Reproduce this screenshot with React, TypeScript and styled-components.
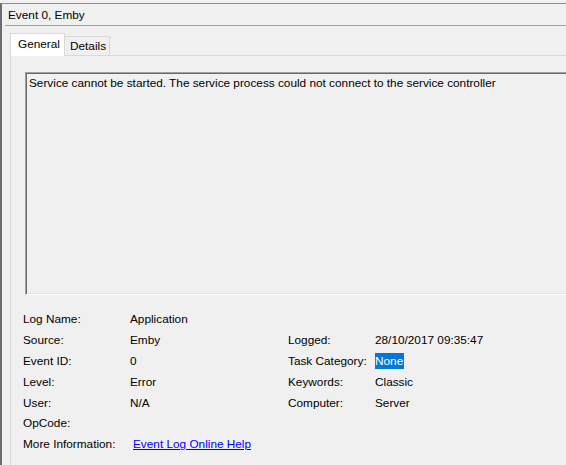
import React from "react";
import styled, { createGlobalStyle } from "styled-components";

const GlobalStyle = createGlobalStyle`
  html, body {
    margin: 0;
    padding: 0;
    background: #f0f0f0;
    overflow: hidden;
  }
  body {
    font-family: "Liberation Sans", Arial, sans-serif;
    font-size: 11.8px;
    color: #000;
  }
`;

const Page = styled.div`
  padding-top: 3px;
  width: 566px;
  height: 465px;
  overflow: hidden;
`;

const Window = styled.div`
  width: 640px;
  height: 462px;
  border-top: 1px solid #8f8f8f;
  border-left: 2px solid #6d6d6d;
  box-sizing: border-box;
  display: flex;
  flex-direction: column;
`;

const TitleBar = styled.div`
  margin-left: 3px;
  height: 21px;
  padding-left: 3px;
  border-bottom: 1px solid #a0a0a0;
  display: flex;
  align-items: center;
`;

const TabArea = styled.div`
  flex: 1;
  padding: 7px 0 0 8px;
  display: flex;
  flex-direction: column;
`;

const TabStrip = styled.div`
  display: flex;
  align-items: flex-end;
  height: 22px;
  position: relative;
  z-index: 1;
`;

const Tab = styled.div<{ $active?: boolean }>`
  box-sizing: border-box;
  height: ${(p) => (p.$active ? "23px" : "19px")};
  margin-bottom: ${(p) => (p.$active ? "-1px" : "0")};
  padding: ${(p) => (p.$active ? "3px 0 0 7px" : "2px 0 0 5px")};
  width: ${(p) => (p.$active ? "55px" : "45px")};
  background: ${(p) => (p.$active ? "#ffffff" : "#f0f0f0")};
  border: 1px solid #d9d9d9;
  border-bottom: none;
  border-left: ${(p) => (p.$active ? "1px solid #d9d9d9" : "none")};
`;

const Panel = styled.div`
  flex: 1;
  border: 1px solid #d9d9d9;
  border-right: none;
  border-bottom: none;
  padding: 16px 0 0 12px;
`;

const TextBox = styled.div`
  margin-left: 2px;
  height: 223px;
  box-sizing: border-box;
  border-top: 1px solid #a0a0a0;
  border-left: 1px solid #a0a0a0;
  border-bottom: 1px solid #ffffff;
  box-shadow: inset 1px 1px 0 #696969, inset 0 -1px 0 #e3e3e3;
  padding: 3px 0 0 3px;
  line-height: 15px;
`;

const Grid = styled.div`
  margin-top: 14px;
  display: grid;
  grid-template-columns: 107px 158px 87px 1fr;
  grid-auto-rows: 20.8px;
  align-items: center;
`;

const Cell = styled.div<{ $col?: number }>`
  grid-column: ${(p) => p.$col ?? "auto"};
  white-space: nowrap;
`;

const Selected = styled.span`
  background: #0078d7;
  color: #ffffff;
  padding: 1px 1px 1px 0;
`;

const Link = styled.a`
  margin-left: 3px;
  color: #0000ff;
  text-decoration: underline;
  cursor: pointer;
`;

type Row = [string, React.ReactNode, string?, React.ReactNode?];

const rows: Row[] = [
  ["Log Name:", "Application"],
  ["Source:", "Emby", "Logged:", "28/10/2017 09:35:47"],
  ["Event ID:", "0", "Task Category:", <Selected>None</Selected>],
  ["Level:", "Error", "Keywords:", "Classic"],
  ["User:", "N/A", "Computer:", "Server"],
  ["OpCode:", ""],
  ["More Information:", <Link>Event Log Online Help</Link>],
];

export default function App() {
  return (
    <Page>
      <GlobalStyle />
      <Window>
        <TitleBar>Event 0, Emby</TitleBar>
        <TabArea>
          <TabStrip>
            <Tab $active>General</Tab>
            <Tab>Details</Tab>
          </TabStrip>
          <Panel>
            <TextBox>
              Service cannot be started. The service process could not connect
              to the service controller
            </TextBox>
            <Grid>
              {rows.map(([l1, v1, l2, v2], i) => (
                <React.Fragment key={i}>
                  <Cell $col={1}>{l1}</Cell>
                  <Cell $col={2}>{v1}</Cell>
                  {l2 && <Cell $col={3}>{l2}</Cell>}
                  {l2 && <Cell $col={4}>{v2}</Cell>}
                </React.Fragment>
              ))}
            </Grid>
          </Panel>
        </TabArea>
      </Window>
    </Page>
  );
}
